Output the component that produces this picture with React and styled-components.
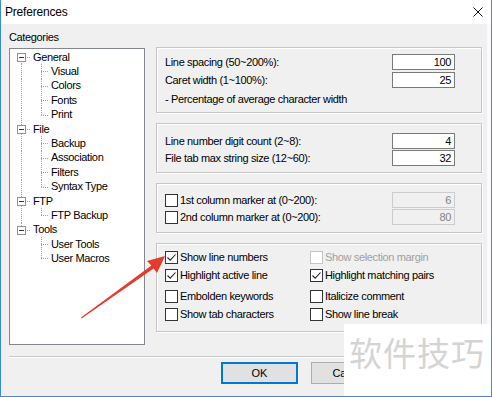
import styled, { createGlobalStyle } from 'styled-components';

const GlobalStyle = createGlobalStyle`
  html, body { margin: 0; padding: 0; background: #fff; }
  body {
    font-family: "Liberation Sans", Arial, sans-serif;
    font-size: 11px;
    letter-spacing: -0.35px;
    color: #000;
  }
  * { box-sizing: border-box; }
`;

const tree = [
  { label: 'General', children: ['Visual', 'Colors', 'Fonts', 'Print'] },
  { label: 'File', children: ['Backup', 'Association', 'Filters', 'Syntax Type'] },
  { label: 'FTP', children: ['FTP Backup'] },
  { label: 'Tools', children: ['User Tools', 'User Macros'] },
];

const options = [
  [
    { label: 'Show line numbers', checked: true },
    { label: 'Show selection margin', disabled: true },
    { label: 'Highlight active line', checked: true },
    { label: 'Highlight matching pairs', checked: true },
  ],
  [
    { label: 'Embolden keywords' },
    { label: 'Italicize comment' },
    { label: 'Show tab characters' },
    { label: 'Show line break' },
  ],
];

const dots = (dir) =>
  `repeating-linear-gradient(${dir}, #a0a0a0 0 1px, transparent 1px 2px)`;

const Window = styled.div`
  position: relative;
  width: 492px;
  height: 397px;
  display: flex;
  flex-direction: column;
  border-left: 1px solid #3a8bd8;
  border-right: 1px solid #3a8bd8;
  border-bottom: 1px solid #3a8bd8;
  overflow: hidden;
`;

const TitleBar = styled.div`
  height: 24px;
  flex: none;
  background: #fff;
  display: flex;
  align-items: center;
  justify-content: space-between;
  padding: 0 8px 0 4px;
  font-size: 12px;
  letter-spacing: -0.2px;
`;

const Body = styled.div`
  flex: 1;
  background: #f0f0f0;
  border-right: 4px solid #f9f9f9;
  display: flex;
  flex-direction: column;
`;

const Content = styled.div`
  display: flex;
  gap: 11px;
  padding-left: 8px;
`;

const LeftCol = styled.div`
  width: 136px;
  padding-top: 6px;
`;

const Caption = styled.div`
  height: 14px;
  line-height: 14px;
  margin-bottom: 4px;
`;

const TreeBox = styled.div`
  height: 297px;
  background: #fff;
  border: 1px solid #828790;
  padding-top: 1px;
`;

const TreeRow = styled.div`
  height: 14.4px;
  display: flex;
  align-items: center;
`;

const Guide = styled.span`
  position: relative;
  flex: none;
  align-self: stretch;
  width: ${(p) => p.$w}px;
  &::before {
    content: '';
    display: ${(p) => (p.$v === 'none' ? 'none' : 'block')};
    position: absolute;
    left: ${(p) => p.$x}px;
    width: 1px;
    top: ${(p) => (p.$v === 'bottom' ? '50%' : '0')};
    bottom: ${(p) => (p.$v === 'top' ? '50%' : '0')};
    background: ${dots('to bottom')};
  }
  &::after {
    content: '';
    display: ${(p) => (p.$h ? 'block' : 'none')};
    position: absolute;
    left: ${(p) => p.$x}px;
    right: 0;
    top: 7px;
    height: 1px;
    background: ${dots('to right')};
  }
`;

const ExpandBox = styled.span`
  position: absolute;
  z-index: 1;
  left: 7px;
  top: 3px;
  width: 9px;
  height: 9px;
  background: #fff;
  border: 1px solid #919191;
  &::after {
    content: '';
    position: absolute;
    left: 1px;
    right: 1px;
    top: 3px;
    height: 1px;
    background: #333;
  }
`;

const NodeLabel = styled.span`
  margin-left: 1px;
  padding: 0 1px;
  line-height: 13px;
  white-space: nowrap;
`;

const RightCol = styled.div`
  width: 326px;
  padding-top: 23px;
  display: flex;
  flex-direction: column;
  gap: 10px;
`;

const Group = styled.div`
  height: ${(p) => p.$h}px;
  padding: ${(p) => p.$top}px 26px 0 8px;
  border: 1px solid #c6c6c6;
  box-shadow: inset 1px 1px 0 #fff, 1px 1px 0 #fff;
  display: flex;
  flex-direction: column;
  gap: ${(p) => p.$gap}px;
`;

const Row = styled.div`
  height: 16px;
  display: flex;
  align-items: center;
  justify-content: space-between;
`;

const Note = styled.div`
  height: 14px;
  line-height: 14px;
  margin-top: 2px;
`;

const NumBox = styled.div`
  width: 63px;
  height: 16px;
  line-height: 14px;
  padding: 0 3px;
  text-align: right;
  background: ${(p) => (p.$disabled ? '#f0f0f0' : '#fff')};
  border: 1px solid ${(p) => (p.$disabled ? '#cccccc' : '#7a7a7a')};
  color: ${(p) => (p.$disabled ? '#838383' : '#000')};
`;

const Check = styled.label`
  display: flex;
  align-items: center;
  gap: 2px;
  height: 16px;
  white-space: nowrap;
  color: ${(p) => (p.$disabled ? '#a0a0a0' : '#000')};
`;

const Box = styled.span`
  width: 13px;
  height: 13px;
  flex: none;
  display: flex;
  align-items: center;
  justify-content: center;
  background: #fff;
  border: 1px solid ${(p) => (p.$disabled ? '#c4c4c4' : '#333')};
`;

const OptionGrid = styled.div`
  display: grid;
  grid-template-columns: 145px 1fr;
  row-gap: 2px;
  & + & {
    margin-top: 5px;
  }
`;

const Separator = styled.div`
  margin: 11px 5px 0 8px;
  height: 2px;
  border-top: 1px solid #c8c8c8;
  border-bottom: 1px solid #fff;
`;

const ButtonRow = styled.div`
  display: flex;
  gap: 13px;
  padding-left: 220px;
  margin-top: 4px;
`;

const Button = styled.button`
  width: 77px;
  height: 22px;
  padding: 0;
  font: inherit;
  color: #000;
  background: #e1e1e1;
  border: 1px solid ${(p) => (p.$default ? '#0078d7' : '#adadad')};
  box-shadow: ${(p) => (p.$default ? 'inset 0 0 0 1px #0078d7' : 'none')};
`;

const Watermark = styled.div`
  position: absolute;
  left: 343px;
  top: 324px;
  right: -1px;
  bottom: -1px;
  background: #fff;
  padding: 8px 0 0 5px;
  font-family: "Noto Sans CJK SC", sans-serif;
  font-size: 33px;
  letter-spacing: 1px;
  line-height: 40px;
  color: #d4d4d4;
`;

const ArrowLayer = styled.svg`
  position: absolute;
  left: -1px;
  top: 0;
  pointer-events: none;
`;

function CheckBox({ label, checked, disabled }) {
  return (
    <Check $disabled={disabled}>
      <Box $disabled={disabled}>
        {checked && (
          <svg width="11" height="11" viewBox="0 0 11 11">
            <path d="M1.5 5.5 L4.2 8.2 L9.5 2.5" fill="none" stroke="#222" strokeWidth="1.1" />
          </svg>
        )}
      </Box>
      {label}
    </Check>
  );
}

function Tree() {
  return (
    <TreeBox>
      {tree.map((node, i) => {
        const first = i === 0;
        const last = i === tree.length - 1;
        return (
          <div key={node.label}>
            <TreeRow>
              <Guide $w={21} $x={11} $h $v={first ? 'bottom' : last ? 'top' : 'full'}>
                <ExpandBox />
              </Guide>
              <NodeLabel>{node.label}</NodeLabel>
            </TreeRow>
            {node.children.map((child, j) => (
              <TreeRow key={child}>
                <Guide $w={21} $x={11} $v={last ? 'none' : 'full'} />
                <Guide $w={18} $x={10} $h $v={j === node.children.length - 1 ? 'top' : 'full'} />
                <NodeLabel>{child}</NodeLabel>
              </TreeRow>
            ))}
          </div>
        );
      })}
    </TreeBox>
  );
}

export default function App() {
  return (
    <>
      <GlobalStyle />
      <Window>
        <TitleBar>
          <span>Preferences</span>
          <svg width="10" height="10" viewBox="0 0 10 10">
            <path d="M0.5 0.5 L9.5 9.5 M9.5 0.5 L0.5 9.5" stroke="#111" strokeWidth="1" />
          </svg>
        </TitleBar>
        <Body>
          <Content>
            <LeftCol>
              <Caption>Categories</Caption>
              <Tree />
            </LeftCol>
            <RightCol>
              <Group $h={66} $top={6} $gap={2}>
                <Row>
                  Line spacing (50~200%):
                  <NumBox>100</NumBox>
                </Row>
                <Row>
                  Caret width (1~100%):
                  <NumBox>25</NumBox>
                </Row>
                <Note>- Percentage of average character width</Note>
              </Group>
              <Group $h={50} $top={9} $gap={1}>
                <Row>
                  Line number digit count (2~8):
                  <NumBox>4</NumBox>
                </Row>
                <Row>
                  File tab max string size (12~60):
                  <NumBox>32</NumBox>
                </Row>
              </Group>
              <Group $h={50} $top={8} $gap={1}>
                <Row>
                  <CheckBox label="1st column marker at (0~200):" />
                  <NumBox $disabled>6</NumBox>
                </Row>
                <Row>
                  <CheckBox label="2nd column marker at (0~200):" />
                  <NumBox $disabled>80</NumBox>
                </Row>
              </Group>
              <Group $h={89} $top={5} $gap={0}>
                {options.map((block, b) => (
                  <OptionGrid key={b}>
                    {block.map((opt) => (
                      <CheckBox key={opt.label} {...opt} />
                    ))}
                  </OptionGrid>
                ))}
              </Group>
            </RightCol>
          </Content>
          <Separator />
          <ButtonRow>
            <Button $default>OK</Button>
            <Button>Cancel</Button>
          </ButtonRow>
        </Body>
        <Watermark>软件技巧</Watermark>
        <ArrowLayer width="492" height="397" viewBox="0 0 492 397">
          <polygon
            points="165,256 157,273 153.6,268.4 81.6,318.6 81,317.6 151.4,265.6 147,261"
            fill="#e53b2c"
          />
        </ArrowLayer>
      </Window>
    </>
  );
}
